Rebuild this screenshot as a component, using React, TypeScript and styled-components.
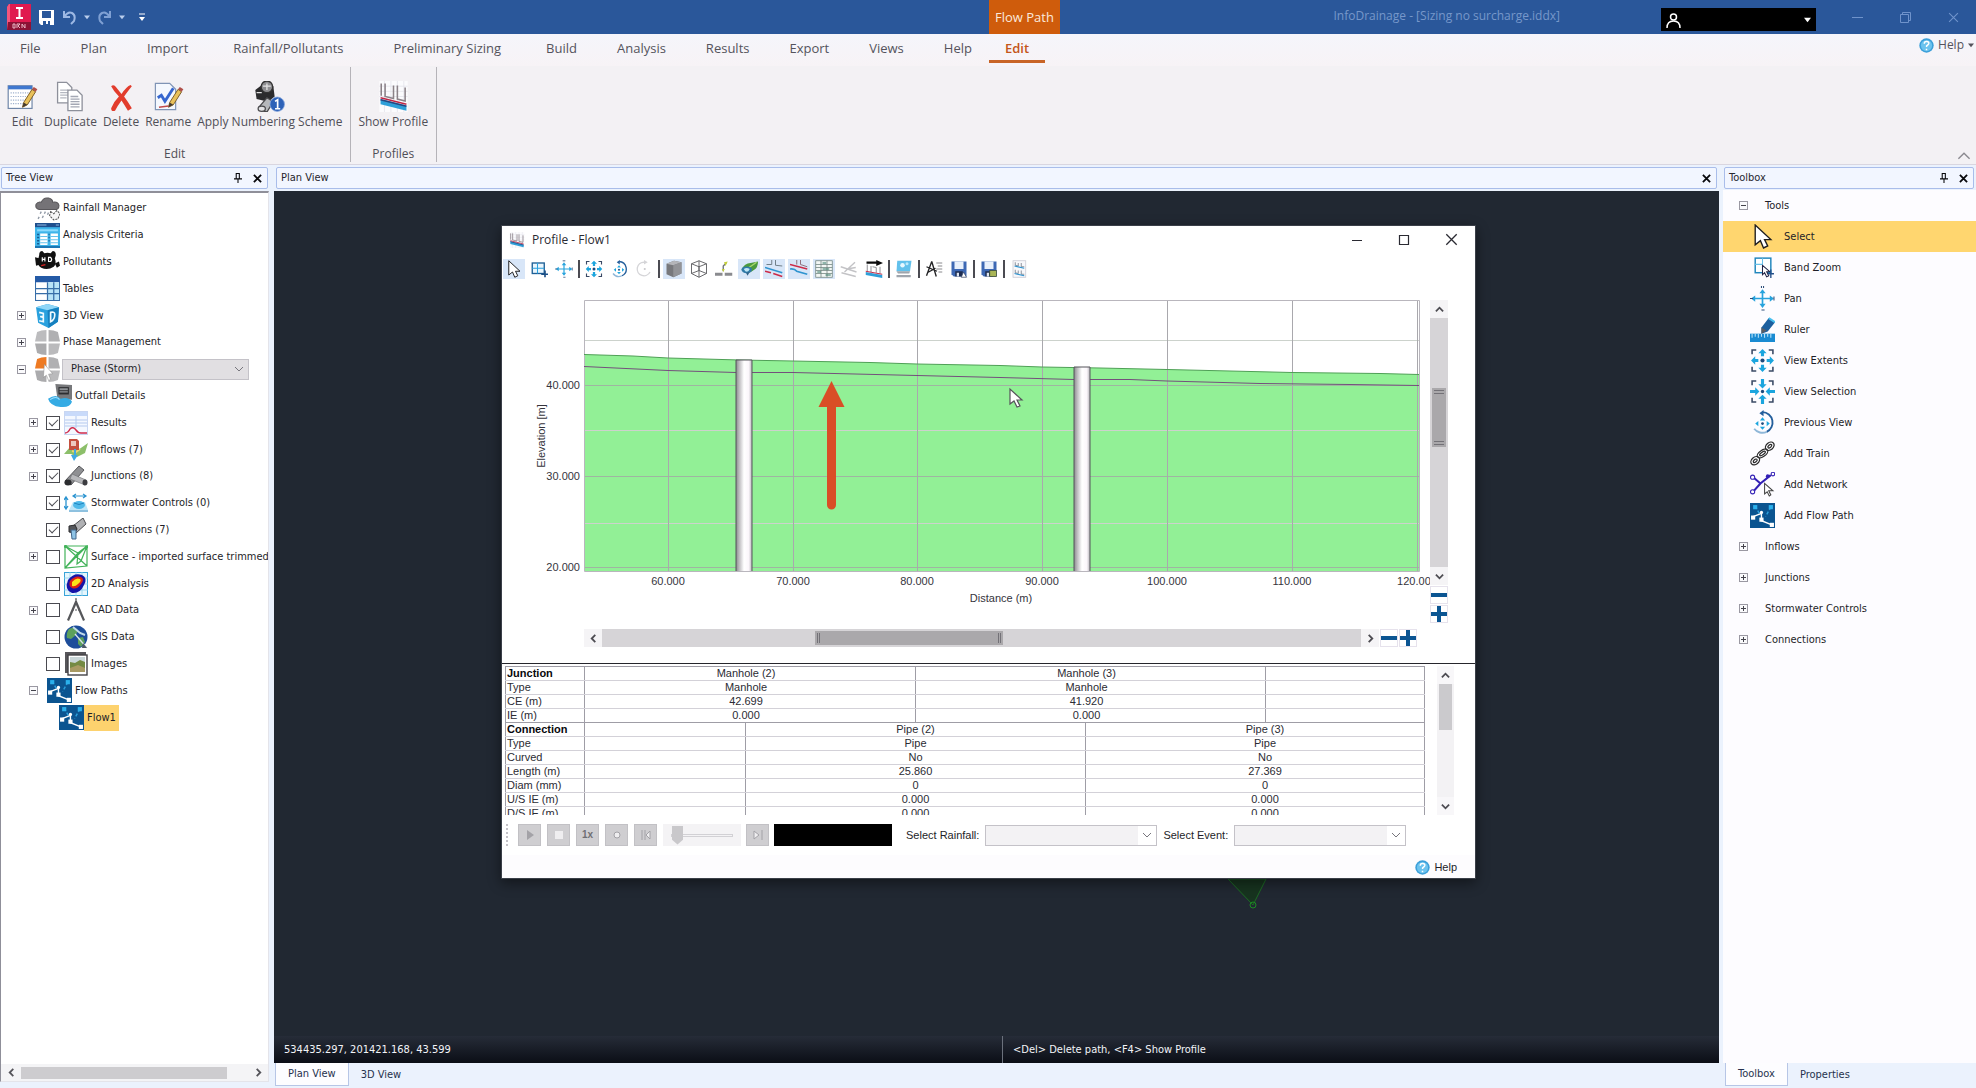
import React from "react";
import styled, { createGlobalStyle, css } from "styled-components";

const TAHOMA = `"DejaVu Sans Condensed", "DejaVu Sans", sans-serif`;
const SEGOE = `"Open Sans", "Noto Sans", sans-serif`;
const ARIAL = `"Liberation Sans", Arial, sans-serif`;
const CONTEXT_START = "989px";

const GlobalStyle = createGlobalStyle`
  *, *::before, *::after { box-sizing: border-box; }
  body { margin: 0; background: #eaf0fb; font: 11px/14px ${TAHOMA}; color: #1e1e28; overflow: hidden; }
  button, select, input { font: inherit; color: inherit; margin: 0; padding: 0; border: 0; background: none; }
  ul { list-style: none; margin: 0; padding: 0; }
  svg { display: block; flex: none; }
`;

/* ---------- icons ---------- */

type IconName = keyof typeof art;

const flowPathArt = (
  <>
    <rect width="24" height="24" fill="#0b5490" />
    <path d="M5 3l5 9M20 4l-5 9" stroke="#2b9fdc" strokeWidth="1.4" strokeDasharray="3 2" fill="none" />
    <rect x="3" y="2" width="4" height="4" fill="#2bb0ec" />
    <rect x="18" y="2" width="4" height="4" fill="#2bb0ec" />
    <path d="M3 13l8-3M11 9v8l10 4" stroke="#fff" strokeWidth="1.3" fill="none" />
    <rect x="1" y="12" width="4" height="4" fill="#fff" />
    <rect x="9" y="14" width="4" height="4" fill="#fff" />
    <circle cx="11" cy="9" r="1.6" fill="#fff" />
    <rect x="19" y="19" width="4" height="4" fill="#fff" />
  </>
);

const corners = <path d="M2 6V2h4M18 2h4v4M22 18v4h-4M6 22H2v-4" stroke="#3a4a66" strokeWidth="1.5" fill="none" />;

const profileArt = (
  <>
    <rect x="1" y="0" width="22" height="24" fill="#fbfbfd" />
    <path d="M1 4h22M1 8h22M1 12h22M5 0v24M10 0v24M15 0v24M20 0v24" stroke="#e2e2ea" strokeWidth=".6" />
    <path d="M2.500 2v9.500M5.500 2v10l6.500 1.500V3.500M15 3.500v10.500l6 1.500V5" stroke="#8b8288" strokeWidth="1.200" fill="none" />
    <path d="M2 14l20 5v4L2 18z" fill="#2d9fd8" />
    <path d="M2 13l20 5" stroke="#c02645" strokeWidth="1.200" />
    <path d="M2 14.500l20 5" stroke="#28467f" strokeWidth="1.200" />
  </>
);

const saveArt = (
  <>
    <path d="M2 2h20v20H5l-3-3z" fill="#3d68b4" />
    <rect x="6" y="2" width="12" height="10" fill="#e8f0fb" />
    <rect x="7" y="15" width="10" height="7" fill="#1d2c50" />
    <rect x="9" y="17" width="3" height="5" fill="#dfe6f2" />
  </>
);

const phaseTiles = (first: string) => (
  <>
    <path d="M2 2q4-2 9-2v11H0z" fill={first} />
    <path d="M13 0q5 0 9 2l2 9H13z" fill="#b0b0b2" />
    <path d="M0 13h11v11q-5 0-9-2z" fill="#ababad" />
    <path d="M13 13h11l-2 9q-4 2-9 2z" fill="#bababc" />
  </>
);

const linkChain = (
  <g fill="none" stroke="#2b2b2b" strokeWidth="1.2">
    <ellipse cx="5" cy="19" rx="4.6" ry="3.4" transform="rotate(-40 5 19)" />
    <ellipse cx="5" cy="19" rx="2.2" ry="1.2" transform="rotate(-40 5 19)" />
    <ellipse cx="12" cy="12" rx="5.8" ry="3" transform="rotate(-35 12 12)" />
    <ellipse cx="12" cy="12" rx="3.2" ry="1.2" transform="rotate(-35 12 12)" />
    <ellipse cx="19" cy="5" rx="4.6" ry="3.4" transform="rotate(-40 19 5)" />
    <ellipse cx="19" cy="5" rx="2.2" ry="1.2" transform="rotate(-40 19 5)" />
  </g>
);

const pencil = (
  <>
    <path d="M14 17l7-11 3 2-7 11-4 2z" fill="#e9c15a" stroke="#7a5a23" strokeWidth=".8" />
    <path d="M21 6l1.500-2 3 2-1.500 2z" fill="#b0504a" />
    <path d="M13 21l1-4 3 2z" fill="#453a30" />
  </>
);

const art = {
  editForm: (
    <>
      <rect x="1" y="3" width="20" height="19" fill="#fff" stroke="#6f86a8" />
      <rect x="1" y="3" width="20" height="3" fill="#3f78cf" />
      <path d="M3 9h16M3 12h16M3 15h16M3 18h16" stroke="#9fb1cd" strokeDasharray="1 1" />
      {pencil}
    </>
  ),
  duplicate: (
    <g fill="#fff" stroke="#8d909a">
      <path d="M2 1h7l4 4v12H2z" />
      <path d="M4 7h6M4 9h6M4 11h6M4 13h5" stroke="#b4b7c0" />
      <path d="M10 7h7l4 4v12H10z" />
      <path d="M12 12h6M12 14h7M12 16h7M12 18h7M12 20h7" stroke="#a4a8b4" />
    </g>
  ),
  remove: (
    <path d="M4 4q2-2 4 1l4 5q4-6 7-7l1 1q-4 5-6 8 3 4 6 9l-3 2q-3-5-5-8-3 4-5 8-3 1-3-2 2-5 6-9-4-4-6-8z" fill="#e23c2c" />
  ),
  rename: (
    <>
      <path d="M2 1h12l5 5v17H2z" fill="#f4f8fe" stroke="#7f94b5" />
      <path d="M4 13l3-2 3 5 7-11" stroke="#3566cf" strokeWidth="2.400" fill="none" />
      {pencil}
      <path d="M5 21l8-1" stroke="#c14b4b" strokeWidth="1.300" />
    </>
  ),
  numbering: (
    <>
      <path d="M1 7l5-4 9 1 1 8-5 4-9-2z" fill="#2b2b2d" />
      <circle cx="10" cy="4.500" r="4.500" fill="#8d8d90" stroke="#333" />
      <path d="M7 4h6M10 2v5M2 9h4" stroke="#e3e3e3" />
      <path d="M4 20l6-7 5 3-5 8-4-1z" fill="#b6b8bb" stroke="#4b4b4e" />
      <ellipse cx="6" cy="21.500" rx="2.800" ry="2" fill="#e3e3e5" stroke="#4b4b4e" />
      <circle cx="18" cy="18" r="5.600" fill="#2d62b8" stroke="#87a8de" strokeWidth=".6" />
      <path d="M16.300 15.800l2-1.300v7M16.300 21.500h4" stroke="#fff" strokeWidth="1.300" fill="none" />
    </>
  ),
  profile: profileArt,
  rain: (
    <>
      <path d="M4 13q-4-1-3-5 2-3 5-2 2-5 7-4 4 1 4 4 5-1 6 3 0 4-4 4z" fill="#757377" stroke="#59575b" />
      <path d="M6 15l-1 2M10 15l-1 2M8 19l-1 2M13 16l-1 2M4 20l-1 2" stroke="#8f98a5" strokeWidth="1.300" />
      <path d="M15 15l3 2 3-3 3 3-2 5-4 1-4-4z" fill="#f5f5f5" stroke="#555" strokeDasharray="2 1" />
    </>
  ),
  criteria: (
    <>
      <rect width="24" height="24" fill="#3fb5ea" />
      <rect width="24" height="4" fill="#1f4f8d" />
      <path d="M2 2h9M20 2h3" stroke="#8fb8e0" />
      <path d="M2 6h20v2H2z" fill="#8adafd" />
      <path d="M5 10h7v11H5zM15 10h7v11h-7z" fill="#fff" />
      <path d="M2 11h2M2 14h2M2 17h2M2 20h2M13 11h1M13 14h1M13 17h1" stroke="#15598f" strokeWidth="1.500" />
      <path d="M5 13h7M5 16h7M5 19h7M15 13h7M15 16h7M15 19h7" stroke="#65c2ec" />
      <rect y="22" width="24" height="2" fill="#1c77b4" />
    </>
  ),
  pollutants: (
    <>
      <path d="M4 6q0-4 3-4l2 2q3-1 6 0l2-2q3 0 3 4l-1 3q2 5-1 8-6 4-12 1-4-2-3-8z" fill="#111" />
      <path d="M0 8l5 1v6l-4 1zM19 14l4-2 1 4-3 2z" fill="#111" />
      <path d="M7 8v4M9.500 8v4M7 10h2.500M13 8v4h2q2-2 0-4z" stroke="#fff" strokeWidth="1.100" fill="none" />
      <path d="M6 16l4-1" stroke="#d22" strokeWidth="1.400" />
    </>
  ),
  tables: (
    <>
      <rect x=".5" y=".5" width="23" height="23" fill="#fff" stroke="#376ea8" />
      <rect width="24" height="6" fill="#245aa6" />
      <rect x="12" y="6" width="11" height="17" fill="#b7e3f7" />
      <path d="M0 12h24M0 17h24M12 6v18M18 6v18" stroke="#376ea8" strokeWidth="1.200" />
    </>
  ),
  view3d: (
    <>
      <path d="M12 1l11 3-1 14-9 6L3 19 1 4z" fill="#2aa1de" />
      <path d="M1 4l11-3 11 3-11 3z" fill="#8fd6f7" />
      <path d="M12 7l11-3-1 14-9 6z" fill="#1580bf" />
      <path d="M4 9l4 1v3l-3 0 3 1v4l-4-1" stroke="#eefaff" strokeWidth="1.600" fill="none" />
      <path d="M15 9v9q4-2 4-7 0-3-4-2z" stroke="#eefaff" strokeWidth="1.600" fill="none" />
    </>
  ),
  phases: phaseTiles("#bcbcbe"),
  phaseActive: (
    <>
      {phaseTiles("#ee7a22")}
      <path d="M9 7l8 9-4 .5 2 5-2 1-2-5-3 2z" fill="#fff" stroke="#8a8a8a" strokeWidth=".5" />
    </>
  ),
  outfall: (
    <>
      <path d="M8 1l16 1v14l-14-1z" fill="#77787b" />
      <path d="M11 4h10v7H11z" fill="#2c2d30" />
      <path d="M12 5h8v2h-8zM12 8h8v1h-8z" fill="#8f9296" />
      <path d="M1 15q8-5 12 0 8-2 11 3-2 6-11 5Q3 22 1 15z" fill="#35abe4" />
      <path d="M3 16q6-4 9 0" stroke="#a5e0fa" fill="none" />
    </>
  ),
  results: (
    <>
      <rect x=".5" y=".5" width="23" height="23" fill="#f4f8ff" stroke="#c8d6f2" />
      <rect x="1" y="1" width="22" height="4" fill="#c8dafa" />
      <path d="M1 9h22M1 12h22M1 15h22M12 5v12" stroke="#b4c9ee" />
      <path d="M1 22q3 0 5-4 3-3 6 1 2 3 5 3h6" stroke="#cf2a4b" strokeWidth="1.400" fill="none" />
    </>
  ),
  inflows: (
    <>
      <path d="M0 16l6-7 8 3 10-7-3 10-8 4-6-3z" fill="#8cbf6a" />
      <path d="M8 13l4 1 4-3" stroke="#e9d46f" strokeWidth="2" fill="none" />
      <path d="M5 1h8l2 2v9H5z" fill="#c4503f" />
      <path d="M7 3h5v5H7z" fill="#eec8bf" />
      <path d="M10 11v6H7l3 6 4-6h-2v-6z" fill="#3fa9e2" />
    </>
  ),
  junctions: (
    <>
      <path d="M1 17L15 2l5 4L7 21z" fill="#8f9093" stroke="#55565a" />
      <path d="M8 10l14 6-1 5L6 15z" fill="#b7b8bb" stroke="#6a6b6e" strokeWidth=".6" />
      <ellipse cx="4" cy="18.500" rx="3.600" ry="3" fill="#2c2d30" />
      <ellipse cx="21" cy="18.500" rx="2.500" ry="3" fill="#3b3c40" />
    </>
  ),
  storm: (
    <>
      <path d="M2 7v10M0 9l2-3 2 3M0 15l2 3 2-3" stroke="#2a93d0" strokeWidth="1.300" fill="none" />
      <path d="M10 5h11M12 3L9 5l3 2M19 3l3 2-3 2" stroke="#2a93d0" strokeWidth="1.200" fill="none" />
      <path d="M5 19l4-8h12l3 8z" fill="#bfe6f8" />
      <ellipse cx="15" cy="14" rx="6" ry="4" fill="#4fb9e9" />
      <path d="M10 12q5 3 10 0M5 20h19" stroke="#1f84c0" fill="none" />
    </>
  ),
  connections: (
    <>
      <path d="M9 8L19 0l3 6-10 9z" fill="#b0b1b4" stroke="#4c4d50" />
      <path d="M5 8l6-1 2 4-2 4-6-1z" fill="#54565a" stroke="#2c2c2e" />
      <path d="M7 12h5v9H8z" fill="#8fc4e6" stroke="#44678a" />
    </>
  ),
  surface: (
    <g fill="none" stroke="#43b35a" strokeWidth="1.200">
      <path d="M1 1h22v20L1 23zM1 1l22 20M23 1L1 23M1 23L14 8l9-7-6 15-4 3 1-11M14 8L1 1" />
      <circle cx="1.500" cy="1.500" r="1" />
      <circle cx="22.500" cy="2" r="1" />
    </g>
  ),
  analysis2d: (
    <>
      <rect x=".5" y=".5" width="23" height="23" fill="#e5f6fd" stroke="#38a3d8" />
      <path d="M6 0v24M12 0v24M18 0v24M0 6h24M0 12h24M0 18h24" stroke="#8ed0ec" strokeWidth=".8" />
      <path d="M4 8q6-8 14-5 6 3 2 10-4 9-12 8-8-3-4-13z" fill="#1614a8" />
      <path d="M6 9q5-6 11-4 4 2 0 7-4 6-9 4-4-2-2-7z" fill="#dd2016" />
      <path d="M8 10q4-5 8-3 2 2-2 5-3 3-6 2z" fill="#fde21a" />
    </>
  ),
  cad: (
    <>
      <path d="M12 1l9 21-2 1L12 7 5 23l-2-1z" fill="#56575a" />
      <path d="M12 0v4M8 12l8 0" stroke="#56575a" strokeWidth="1.200" strokeDasharray="2 1" />
    </>
  ),
  gis: (
    <>
      <circle cx="12" cy="12" r="11.500" fill="#1d4d9a" />
      <path d="M5 4q6-3 9 1l-2 5-5 4-4-1Q2 8 5 4zM14 13l5-1 2 5-4 5-3-3z" fill="#5da05c" />
      <path d="M9 2l7 6 5 2" stroke="#bfd9ea" strokeWidth="2" fill="none" />
      <path d="M11 9l12 14" stroke="#d8e2ea" strokeWidth="1.300" />
      <path d="M19 18l4 5h-5z" fill="#4c5965" />
    </>
  ),
  images: (
    <>
      <path d="M1 0h21v3H4v18H1z" fill="#57565a" />
      <rect x="4" y="3" width="19" height="20" fill="#fff" stroke="#434246" strokeWidth="1.400" />
      <rect x="6" y="5" width="15" height="15" fill="#748a43" />
      <path d="M6 5h15v5l-5-2-5 3-5-1z" fill="#c9d6d8" />
      <path d="M6 16l8-3 7 3v4H6z" fill="#a89a63" />
    </>
  ),
  flowPath: flowPathArt,
  arrow: <path d="M5 1v19l5-4 3 7 4-2-3-6h6z" fill="#fff" stroke="#1d1d1f" strokeWidth="1.300" />,
  bandZoom: (
    <>
      <rect x="5" y="3" width="15" height="14" fill="#fff" stroke="#2186bd" strokeWidth="1.400" />
      <path d="M5 9h7M12 3v6" stroke="#69c1ea" />
      <path d="M12 10v9l2-2 2 4 2-1-2-4h3z" fill="#fff" stroke="#224" />
      <path d="M20 14v8M17 18h6" stroke="#234f8a" strokeWidth="1.300" />
    </>
  ),
  bandZoomSmall: (
    <>
      <rect x="3" y="4" width="16" height="14" fill="#eaf6fd" stroke="#1d5f96" strokeWidth="1.800" />
      <path d="M3 11h16M10 4v14" stroke="#2aa1de" strokeWidth="1.400" />
      <path d="M20 14v9M15 19h9" stroke="#1c4f86" strokeWidth="2.200" />
    </>
  ),
  pan: (
    <>
      <path d="M12 5v14M4 12h16" stroke="#27a3dd" strokeWidth="1.600" />
      <path d="M12 3l3 4H9zM12 21l3-4H9zM19 9l4 3-4 3zM5 9l-4 3 4 3z" fill="#27a3dd" />
      <path d="M11 0v2M13 0v2M11 23h3M0 12h3M23 10v4" stroke="#2c4d78" />
    </>
  ),
  ruler: (
    <>
      <rect x="0" y="16" width="24" height="8" fill="#1a8bd2" />
      <path d="M2 16v4M5 16v3M8 16v4M11 16v3M14 16v4M17 16v3M20 16v4" stroke="#bfe6fb" />
      <path d="M11 10l7-9 6 4-7 9-6 2z" fill="#1c5f9e" />
      <path d="M18 1l6 4" stroke="#49c0ef" strokeWidth="2" />
      <path d="M11 10l5 3-5 3z" fill="#5b5e63" />
    </>
  ),
  extents: (
    <>
      {corners}
      <path d="M12 1l4 4h-2.500v3h-3V5H8zM12 23l4-4h-2.500v-3h-3v3H8zM1 12l4-4v2.500h3v3H5V16zM23 12l-4-4v2.500h-3v3h3V16z" fill="#1ba5de" />
      <circle cx="12" cy="12" r="2" fill="#1d4a7c" />
    </>
  ),
  selection: (
    <>
      {corners}
      <path d="M12 9L8 5h2.500V0h3v5H16zM12 15l4 4h-2.500v5h-3v-5H8zM9 12l-4-4v2.500H0v3h5V16zM15 12l4-4v2.500h5v3h-5V16z" fill="#1ba5de" />
      <circle cx="12" cy="12" r="1.600" fill="#1d4a7c" />
    </>
  ),
  previous: (
    <>
      <path d="M12 2a10 10 0 0 1 4 19" stroke="#245f9c" strokeWidth="1.800" fill="none" />
      <path d="M16 21a10 10 0 0 1-12-3" stroke="#8fb7d8" strokeWidth="1.800" fill="none" />
      <path d="M13 0v6L9 3z" fill="#245f9c" />
      <path d="M12 7l2.500 3h-5zM12 19l2.500-3h-5zM5 13l3-2.500v5zM19 13l-3-2.500v5z" fill="#1ba5de" />
      <circle cx="12" cy="13" r="1.300" fill="#1d4a7c" />
    </>
  ),
  next: (
    <>
      <path d="M12 3a9 9 0 1 0 8 13" stroke="#d5d5d8" strokeWidth="1.800" fill="none" />
      <path d="M12 0v6l5-3z" fill="#d5d5d8" />
      <circle cx="13" cy="12" r="1.400" fill="#c8c8cc" />
    </>
  ),
  train: linkChain,
  network: (
    <>
      <path d="M2 4l8 7 10-8M10 11l-8 9" stroke="#3320b5" strokeWidth="2" fill="none" />
      <circle cx="2.500" cy="5" r="2" fill="#fff" stroke="#3320b5" />
      <circle cx="2.500" cy="19" r="2" fill="#fff" stroke="#3320b5" />
      <circle cx="17" cy="4" r="1.800" fill="#3320b5" />
      <circle cx="22" cy="2" r="1.700" fill="#fff" stroke="#3320b5" />
      <path d="M14 11v10l2.500-2 2 4 1.500-1-2-4h4z" fill="#fff" stroke="#444" />
    </>
  ),
  cube: (
    <>
      <path d="M2 5l10-4 10 2v15l-11 5-9-4z" fill="#77787c" />
      <path d="M2 5l10-4 10 2-11 4z" fill="#b4b5b9" />
      <path d="M11 7l11-4v15l-11 5z" fill="#929397" />
    </>
  ),
  wireCube: (
    <path d="M2 5l10-4 10 4v13l-10 5-10-5zM2 5l10 4 10-4M12 9v14M12 1v13M2 18l10-4 10 4" stroke="#5a5a5e" strokeWidth="1.200" fill="none" />
  ),
  levels: (
    <>
      <path d="M0 17h10v4H0zM13 17h10v4H13z" fill="#8a8b8f" />
      <path d="M11 15V8l4-4" stroke="#6d7277" strokeWidth="1.800" fill="none" />
      <path d="M9 12l2 4 2-4zM12 3l5-1-3 6z" fill="#c4cf3b" />
    </>
  ),
  leaf: (
    <>
      <path d="M2 13Q6 4 14 4l10-2q0 8-5 11-7 6-13 3z" fill="#4c9a3d" />
      <path d="M12 10q6-4 10-7" stroke="#a6d66c" strokeWidth="2" fill="none" />
      <ellipse cx="9" cy="13" rx="7" ry="4.500" fill="#2f7aa8" />
      <path d="M5 12q4-3 8 0-2 5-6 3z" fill="#bfe5f5" />
      <path d="M8 17l2 4 3-5z" fill="#33648a" />
    </>
  ),
  linesA: (
    <>
      <path d="M2 6h7V0M14 0v7l9 1" stroke="#6e7c86" strokeWidth="1.300" fill="none" />
      <path d="M0 10l23 7" stroke="#2f94d0" strokeWidth="2.200" />
      <path d="M0 15l8 2M11 18l12 4" stroke="#cc2a48" strokeWidth="2" />
    </>
  ),
  linesB: (
    <>
      <path d="M14 0v6l9 3M9 0v6" stroke="#8e6f7c" strokeWidth="1.300" fill="none" />
      <path d="M0 6l23 6" stroke="#cc2a48" strokeWidth="1.800" />
      <path d="M0 12q6-1 9 3l14 4" stroke="#2f94d0" strokeWidth="2.200" fill="none" />
    </>
  ),
  grid: (
    <>
      <rect x="1" y="1" width="22" height="22" fill="#f3f7f5" stroke="#6e827c" />
      <path d="M1 6h22M1 10h22M1 14h22M1 18h22M8 1v22M16 1v22" stroke="#6e827c" />
      <path d="M10 4h5M10 12h9M3 16h5M14 20h7" stroke="#2c7460" strokeWidth="1.600" />
    </>
  ),
  fadedLines: (
    <path d="M1 9l21 7M2 17l19 5M6 16L20 3M9 12l12-2" stroke="#c3c3c6" strokeWidth="1.800" fill="none" />
  ),
  direction: (
    <>
      <path d="M2 2h13V0l9 4-9 4V5H2z" fill="#0c0c0d" />
      <path d="M3 6v9M8 8v8M10 9l5 1v7M20 9v9" stroke="#85858a" strokeWidth="1.200" fill="none" />
      <path d="M1 16l22 4v4L1 20z" fill="#2d9fd8" />
      <path d="M1 15l22 4" stroke="#c02645" strokeWidth="1.300" />
    </>
  ),
  image3d: (
    <>
      <path d="M3 1h19l-2 14H2z" fill="#62c1ec" />
      <circle cx="10" cy="7" r="3" fill="#e7f8ff" />
      <circle cx="16" cy="5" r="2" fill="#bdeafc" />
      <path d="M2 15h18l-1 3H4zM2 20h19v3H2z" fill="#9fa5ad" />
    </>
  ),
  scaleText: (
    <>
      <path d="M9 2l6 20M9 2L2 21M2 9l14 6M3 17l11-6" stroke="#232325" strokeWidth="1.800" fill="none" />
      <path d="M15 4h8M17 8h6M15 12h8M18 16h5" stroke="#7c7c80" strokeWidth="1.200" />
    </>
  ),
  saveA: (
    <>
      {saveArt}
      <path d="M15 23l3-7 4 7z" fill="#fff" stroke="#3b4a68" />
    </>
  ),
  saveB: (
    <>
      {saveArt}
      <rect x="13" y="14" width="9" height="8" fill="#a9b556" stroke="#3b4a38" />
    </>
  ),
  report: (
    <>
      <rect x="4" y="1" width="17" height="22" fill="#f8f8fb" stroke="#c6c6cf" />
      <path d="M7 3v4l4 1V4M15 4v5h4M7 13v4l4 1v-4M15 14v5h4" stroke="#6a707c" fill="none" />
      <path d="M6 8l13 3M6 18l13 3" stroke="#2f94d0" strokeWidth="1.600" />
    </>
  ),
  help: (
    <>
      <circle cx="12" cy="12" r="11.500" fill="#3b9fd9" />
      <circle cx="12" cy="12" r="9" fill="#6cc3ee" />
      <path d="M8.500 9q0-4 4-3.500 4 .5 3 3.700-.6 1.500-3.300 3.300v2M12 17v2.600" stroke="#fff" strokeWidth="2.400" fill="none" />
    </>
  ),
};

const Icon = ({ name, size = 24 }: { name: IconName; size?: number }) => (
  <svg width={size} height={size} viewBox={name === "editForm" || name === "rename" ? "0 0 26 24" : "0 0 24 24"} aria-hidden="true">
    {art[name]}
  </svg>
);

const Chevron = ({ dir = "down", size = 9, width = 1 }: { dir?: "up" | "down" | "left" | "right"; size?: number; width?: number }) => {
  const d = { down: "M1 3l4 4 4-4", up: "M1 7l4-4 4 4", left: "M7 1L3 5l4 4", right: "M3 1l4 4-4 4" }[dir];
  return (
    <svg width={size} height={size} viewBox="0 0 10 10" aria-hidden="true">
      <path d={d} fill="none" stroke="currentColor" strokeWidth={width} />
    </svg>
  );
};

const Caret = ({ size = 7 }: { size?: number }) => (
  <svg width={size} height={size} viewBox="0 0 8 8" aria-hidden="true">
    <path d="M0 2h8L4 7z" fill="currentColor" />
  </svg>
);

const Cross = ({ size = 10, width = 1 }: { size?: number; width?: number }) => (
  <svg width={size} height={size} viewBox="0 0 10 10" aria-hidden="true">
    <path d="M1 1l8 8M9 1L1 9" stroke="currentColor" strokeWidth={width} />
  </svg>
);

const Pin = () => (
  <svg width="8" height="10" viewBox="0 0 9 11" aria-hidden="true">
    <path d="M2.500 0v6M2 .5h4.500M6 0v6M0 6.500h9M4.500 7v4" stroke="currentColor" strokeWidth="1.200" fill="none" />
  </svg>
);

/* ---------- window frame ---------- */

const Page = styled.div`
  height: 100vh;
  min-height: 960px;
  display: flex;
  flex-direction: column;
`;

const TitleBar = styled.header`
  display: flex;
  height: 34px;
  background: #2a579a;
  color: #fff;
  font-family: ${SEGOE};
`;

const QuickAccess = styled.div`
  flex: 0 0 ${CONTEXT_START};
  display: flex;
  align-items: center;
  gap: 7px;
  padding-left: 7px;
`;

const FlatButton = styled.button<{ $tone?: string }>`
  display: grid;
  place-items: center;
  color: ${(p) => p.$tone ?? "inherit"};
`;

const ContextTitle = styled.div`
  width: 71px;
  padding-top: 8px;
  background: #cf5c0c;
  color: #fbe9dc;
  font-size: 13px;
  line-height: 18px;
  text-align: center;
`;

const WindowTitle = styled.div`
  margin-left: auto;
  padding-right: 101px;
  font-size: 12px;
  line-height: 32px;
  color: #7797ca;
`;

const Account = styled.button`
  display: flex;
  align-items: center;
  justify-content: space-between;
  width: 155px;
  height: 23px;
  margin-top: 8px;
  padding: 0 5px;
  background: #000;
  color: #fff;
`;

const WindowButtons = styled.div`
  display: flex;
  align-items: center;
  gap: 37px;
  padding: 0 17px 0 36px;
  color: #6f93cb;
`;

const MenuBar = styled.nav`
  display: flex;
  height: 32px;
  background: linear-gradient(#f5f5fb, #f7f3f6);
  font: 13px/18px ${SEGOE};
  color: #54535c;
`;

const MenuTabs = styled.div`
  flex: 0 0 ${CONTEXT_START};
  display: flex;
  min-width: 0;
`;

const MenuTab = styled.button<{ $wide?: boolean; $active?: boolean }>`
  flex: none;
  padding: 0 ${(p) => (p.$wide ? 25 : 20)}px;
  height: 28px;
  white-space: nowrap;
  ${(p) =>
    p.$active &&
    css`
      width: 56px;
      height: 29px;
      padding: 2px 0 0;
      font-weight: 600;
      color: #c4561a;
      border-bottom: 3px solid #c86426;
    `}
`;

const HelpMenu = styled.button`
  display: flex;
  align-items: center;
  gap: 4px;
  height: 22px;
  margin-left: auto;
  padding-right: 2px;
  font-size: 12px;
`;

const Ribbon = styled.section`
  display: flex;
  height: 99px;
  background: #f3f1f4;
  border-bottom: 1px solid #d9d6e0;
  font: 12px/16px ${SEGOE};
  color: #504f57;
`;

const RibbonGroup = styled.div`
  display: flex;
  flex-direction: column;
  justify-content: space-between;
  align-items: center;
  height: 95px;
  margin-top: 1px;
  padding: 14px 8px 0 7px;
  border-right: 1px solid #b5b3b8;
`;

const RibbonItems = styled.div`
  display: flex;
  gap: 6px;
`;

const RibbonButton = styled.button`
  display: flex;
  flex-direction: column;
  align-items: center;
  gap: 2px;
  white-space: nowrap;
`;

const Collapse = styled.button`
  align-self: flex-end;
  margin: 0 5px 1px auto;
  color: #8b8a90;
`;

const Workspace = styled.main`
  flex: 1;
  display: flex;
  min-height: 0;
  padding-top: 2px;
  background: #ebf2fd;
`;

const Side = styled.aside<{ $width: number }>`
  flex: 0 0 ${(p) => p.$width}px;
  display: flex;
  flex-direction: column;
  min-width: 0;
`;

const Center = styled.section`
  flex: 1;
  display: flex;
  flex-direction: column;
  min-width: 0;
`;

const PaneHeader = styled.header<{ $left?: number; $right?: number }>`
  display: flex;
  align-items: center;
  gap: 11px;
  height: 22px;
  margin: 0 ${(p) => p.$right ?? 2}px 0 ${(p) => p.$left ?? 1}px;
  padding: 0 5px 0 4px;
  background: #f2f6ff;
  border: 1px solid #a9bdea;
  border-radius: 2px;
  color: #26262e;

  h2 {
    flex: 1;
    margin: 0;
    font: inherit;
  }
  button {
    color: #08080c;
  }
`;

const BottomTabs = styled.div<{ $start?: number }>`
  display: flex;
  height: 25px;
  padding-left: ${(p) => p.$start ?? 1}px;
`;

const BottomTab = styled.button<{ $active?: boolean }>`
  height: 23px;
  padding: 0 12px;
  color: #26324e;
  ${(p) =>
    p.$active &&
    css`
      background: #fdfdff;
      border: 1px solid #b7c6e6;
      border-top: 0;
    `}
`;

/* ---------- tree ---------- */

const TreeBody = styled.div`
  flex: 1;
  display: flex;
  flex-direction: column;
  justify-content: space-between;
  margin: 2px 5px 6px 0;
  background: #fff;
  border: 1px solid #8f8f99;
  border-top-width: 2px;
  border-right-color: #e4e4ea;
  border-bottom-color: #e4e4ea;
  overflow: hidden;
`;

const TreeList = styled.ul`
  display: grid;
  grid-auto-rows: 1fr;
  height: 538px;
  padding-top: 2px;
`;

const TreeRow = styled.li<{ $indent: number }>`
  display: flex;
  align-items: center;
  padding-left: ${(p) => p.$indent}px;
  white-space: nowrap;
`;

const Expander = styled.button`
  display: grid;
  place-items: center;
  width: 9px;
  height: 9px;
  border: 1px solid #9a98a2;
  background: #fafafc;
  color: #44434c;
`;

const ExpanderSlot = styled.span<{ $gap: number }>`
  flex: none;
  width: 9px;
  margin-right: ${(p) => p.$gap}px;
`;

const TreeLabel = styled.label<{ $selected?: boolean }>`
  padding: 0 3px;
  line-height: 26px;
  ${(p) => p.$selected && "background: #fdd26e;"}
`;

const CheckBox = styled.input.attrs({ type: "checkbox" })`
  appearance: none;
  flex: none;
  width: 14px;
  height: 14px;
  margin-right: 4px;
  border: 1px solid #4a4a50;
  background: #fff;
  display: grid;
  place-items: center;

  &:checked::after {
    content: "";
    width: 9px;
    height: 5px;
    margin-top: -3px;
    border: solid #4a4a50;
    border-width: 0 0 1px 1px;
    rotate: -45deg;
  }
`;

const SelectBox = styled.span<{ $width: number; $shade: string; $key: string }>`
  display: grid;
  grid-template: 19px / 1fr 18px;
  align-items: center;
  width: ${(p) => p.$width}px;
  background: linear-gradient(to left, ${(p) => p.$key} 18px, ${(p) => p.$shade} 18px);
  border: 1px solid #c4c2c8;

  select {
    grid-area: 1 / 1 / 2 / 3;
    appearance: none;
    height: 100%;
    padding-left: 8px;
  }
  svg {
    grid-area: 1 / 2;
    justify-self: center;
    pointer-events: none;
    color: #77767d;
  }
`;

const PhaseSlot = styled.span`
  margin-left: 2px;
`;

const HScroll = styled.div`
  display: flex;
  align-items: center;
  height: 17px;
  background: #f4f4f6;
  color: #55545a;

  button {
    width: 20px;
    display: grid;
    place-items: center;
  }
`;

const HTrack = styled.div`
  flex: 1;
  height: 12px;
`;

const HThumb = styled.div`
  width: 206px;
  height: 12px;
  background: #cdcccf;
`;

type Node = {
  label: string;
  icon: IconName;
  level: 0 | 1 | 2;
  sign?: "+" | "-";
  checked?: boolean;
  combo?: boolean;
  selected?: boolean;
};

const nodes: Node[] = [
  { label: "Rainfall Manager", icon: "rain", level: 0 },
  { label: "Analysis Criteria", icon: "criteria", level: 0 },
  { label: "Pollutants", icon: "pollutants", level: 0 },
  { label: "Tables", icon: "tables", level: 0 },
  { label: "3D View", icon: "view3d", level: 0, sign: "+" },
  { label: "Phase Management", icon: "phases", level: 0, sign: "+" },
  { label: "Phase (Storm)", icon: "phaseActive", level: 0, sign: "-", combo: true },
  { label: "Outfall Details", icon: "outfall", level: 1 },
  { label: "Results", icon: "results", level: 1, sign: "+", checked: true },
  { label: "Inflows (7)", icon: "inflows", level: 1, sign: "+", checked: true },
  { label: "Junctions (8)", icon: "junctions", level: 1, sign: "+", checked: true },
  { label: "Stormwater Controls (0)", icon: "storm", level: 1, checked: true },
  { label: "Connections (7)", icon: "connections", level: 1, checked: true },
  { label: "Surface - imported surface trimmed", icon: "surface", level: 1, sign: "+", checked: false },
  { label: "2D Analysis", icon: "analysis2d", level: 1, checked: false },
  { label: "CAD Data", icon: "cad", level: 1, sign: "+", checked: false },
  { label: "GIS Data", icon: "gis", level: 1, checked: false },
  { label: "Images", icon: "images", level: 1, checked: false },
  { label: "Flow Paths", icon: "flowPath", level: 1, sign: "-" },
  { label: "Flow1", icon: "flowPath", level: 2, selected: true },
];

const ExpandSign = ({ sign, name }: { sign: "+" | "-"; name: string }) => (
  <Expander aria-label={`${sign === "+" ? "Expand" : "Collapse"} ${name}`}>
    <svg width="5" height="5" viewBox="0 0 5 5" aria-hidden="true">
      <path d={sign === "+" ? "M0 2.500h5M2.500 0v5" : "M0 2.500h5"} stroke="currentColor" />
    </svg>
  </Expander>
);

const Tree = () => (
  <TreeList>
    {nodes.map((n) => {
      const id = `node-${n.label.replace(/\W+/g, "-")}`;
      const hasBox = n.checked !== undefined;
      return (
        <TreeRow key={n.label} $indent={16 + n.level * 12}>
          <ExpanderSlot $gap={hasBox ? 8 : 9}>{n.sign && <ExpandSign sign={n.sign} name={n.label} />}</ExpanderSlot>
          {hasBox && <CheckBox id={id} defaultChecked={n.checked} />}
          <Icon name={n.icon} size={hasBox ? 24 : 25} />
          {n.combo ? (
            <PhaseSlot>
              <SelectBox $width={187} $shade="#e1dfe2" $key="#e1dfe2">
                <select aria-label="Phase" defaultValue={n.label}>
                  <option>{n.label}</option>
                </select>
                <Chevron size={10} />
              </SelectBox>
            </PhaseSlot>
          ) : (
            <TreeLabel as={hasBox ? "label" : "span"} htmlFor={hasBox ? id : undefined} $selected={n.selected}>
              {n.label}
            </TreeLabel>
          )}
        </TreeRow>
      );
    })}
  </TreeList>
);

/* ---------- toolbox ---------- */

const ToolboxBody = styled.div`
  flex: 1;
  margin: 1px 0 0 4px;
  background: #fdfcff;
`;

const ToolRow = styled.li<{ $active?: boolean }>`
  ${(p) => p.$active && "background: #ffd66f;"}
`;

const ToolButton = styled.button`
  display: flex;
  align-items: center;
  gap: 9px;
  width: 100%;
  height: 31px;
  padding-left: 27px;
`;

const CategoryRow = styled.div`
  display: flex;
  align-items: center;
  gap: 17px;
  height: 31px;
  padding-left: 16px;
`;

const tools: [string, IconName][] = [
  ["Select", "arrow"],
  ["Band Zoom", "bandZoom"],
  ["Pan", "pan"],
  ["Ruler", "ruler"],
  ["View Extents", "extents"],
  ["View Selection", "selection"],
  ["Previous View", "previous"],
  ["Add Train", "train"],
  ["Add Network", "network"],
  ["Add Flow Path", "flowPath"],
];

const Category = ({ name, sign }: { name: string; sign: "+" | "-" }) => (
  <CategoryRow>
    <ExpandSign sign={sign} name={name} />
    {name}
  </CategoryRow>
);

/* ---------- plan canvas ---------- */

const Canvas = styled.div`
  position: relative;
  flex: 1;
  display: flex;
  flex-direction: column;
  justify-content: flex-end;
  margin-top: 2px;
  background: #212832;
`;

const SurfaceTip = styled.svg`
  position: absolute;
  left: 952px;
  top: 686px;
`;

const StatusBar = styled.footer`
  display: flex;
  height: 27px;
  background: linear-gradient(#262c38, #0b0e16);
  color: #f2f4f8;
  line-height: 27px;
`;

const StatusCell = styled.div<{ $width?: number }>`
  flex: ${(p) => (p.$width ? `0 0 ${p.$width}px` : "1")};
  padding-left: 10px;

  & + & {
    border-left: 1px solid #6b717c;
  }
`;

/* ---------- profile window ---------- */

const Dialog = styled.section`
  position: absolute;
  left: 227px;
  top: 34px;
  width: 975px;
  background: #fff;
  box-shadow: 0 4px 12px rgba(0, 0, 0, 0.45);
  border: 1px solid #3a3f48;
  font-family: ${ARIAL};
`;

const DialogTitle = styled.header`
  display: flex;
  align-items: center;
  height: 29px;
  padding: 0 17px 2px 7px;
  gap: 7px;
  font: 12px/16px ${SEGOE};
  color: #2a2a32;

  h1 {
    flex: 1;
    margin: 0;
    font: inherit;
  }
`;

const DialogButtons = styled.div`
  display: flex;
  align-items: center;
  gap: 35px;
`;

const ToolBar = styled.div`
  display: flex;
  align-items: center;
  gap: 3px;
  height: 27px;
  padding-left: 1px;
`;

const ToolIcon = styled.button<{ $on?: boolean }>`
  display: grid;
  place-items: center;
  width: 22px;
  height: 20px;
  ${(p) => p.$on && "background: #d8e6f8;"}
`;

const Divider = styled.span`
  width: 2px;
  height: 18px;
  background: #4b4b52;
`;

const toolbar: (IconName | "|")[] = [
  "arrow", "bandZoomSmall", "pan", "|",
  "extents", "previous", "next", "|",
  "cube", "wireCube", "levels", "leaf", "linesA", "linesB", "grid", "fadedLines", "direction", "|",
  "image3d", "|",
  "scaleText", "saveA", "|",
  "saveB", "|",
  "report",
];
const pressed = ["arrow", "cube", "leaf", "linesA", "linesB", "grid"];

const ChartArea = styled.div`
  display: grid;
  grid-template-columns: 927px 18px;
  padding: 18px 0 0 1px;
`;

const VBar = styled.div<{ $track: string; $edge: string }>`
  display: flex;
  flex-direction: column;
  background: ${(p) => p.$track};
  color: #4d4c52;

  > button {
    display: grid;
    place-items: center;
    width: 100%;
    height: 18px;
    background: ${(p) => p.$edge};
  }
`;

const VBarTrack = styled.div<{ $height: number; $before: number }>`
  height: ${(p) => p.$height}px;
  padding: ${(p) => p.$before}px 2px 0;
`;

const Grip = styled.div<{ $vertical?: boolean }>`
  display: flex;
  flex-direction: ${(p) => (p.$vertical ? "column" : "row")};
  justify-content: space-between;
  ${(p) => (p.$vertical ? "height: 59px; padding: 2px;" : "width: 188px; height: 14px; padding: 2px;")}
  background: #aaa8ab;

  i {
    ${(p) => (p.$vertical ? "height: 4px; border: solid #737177; border-width: 1px 0;" : "width: 3px; border: solid #737177; border-width: 0 1px;")}
  }
`;

const ZoomKey = styled.button`
  display: grid;
  place-items: center;
  width: 18px;
  height: 18px;
  border: 1px solid #e6e2ec;
  background: #fff;
  color: #0b5592;
`;

const SideKeys = styled.div`
  display: flex;
  flex-direction: column;
  gap: 1px;
`;

const RangeRow = styled.div`
  display: flex;
  gap: 1px;
  height: 34px;
  padding-left: 82px;
`;

const RangeBar = styled.div`
  display: flex;
  width: 795px;
  height: 18px;
  background: #d6d4d7;
  color: #4d4c52;

  button {
    display: grid;
    place-items: center;
    width: 18px;
    background: #f5f4f6;
  }
`;

const RangeTrack = styled.div`
  flex: 1;
  padding: 2px 0 0 213px;
`;

const DataPane = styled.div`
  display: flex;
  justify-content: space-between;
  height: 152px;
  padding: 2px 21px 0 3px;
  border-top: 1px solid #26262c;
  overflow: hidden;
`;

const Tables = styled.div`
  width: 920px;
  height: 149px;
  overflow: hidden;
`;

const DataTable = styled.table`
  width: 100%;
  table-layout: fixed;
  border-collapse: collapse;
  line-height: 13px;
  color: #2b2b33;

  & + & {
    margin-top: -1px;
  }
  th,
  td {
    height: 14px;
    padding: 0 8px 0 0;
    border: 1px solid #d3d1d8;
    border-left-color: #9f9da6;
    border-right-color: #9f9da6;
    text-align: center;
  }
  & + & td {
    padding: 0;
  }
  & + & td:last-child {
    padding-left: 20px;
  }
  th {
    padding: 0 0 0 1px;
    font-weight: 400;
    text-align: left;
  }
  tr:first-child th {
    font-weight: 700;
    color: #08080c;
  }
  tr:first-child > * {
    border-top-color: #9f9da6;
  }
`;

const TableThumb = styled.div`
  width: 13px;
  height: 46px;
  background: #cbcacd;
`;

const Playback = styled.div`
  display: flex;
  align-items: center;
  height: 40px;
  padding-left: 4px;
`;

const GripDots = styled.span`
  width: 4px;
  height: 22px;
  margin-right: 8px;
  border-left: 2px dotted #c4c2c8;
`;

const PlayButtons = styled.div`
  display: flex;
  gap: 6px;
`;

const PlayButton = styled.button`
  display: grid;
  place-items: center;
  width: 23px;
  height: 22px;
  background: #cfced1;
  border: 1px solid #c2c1c5;
  color: #a3a2a7;
`;

const Rate = styled.span`
  font-weight: 700;
  font-size: 10px;
  color: #6f6e74;
`;

const Speed = styled.input.attrs({ type: "range" })`
  appearance: none;
  width: 78px;
  height: 22px;
  margin: 0 5px 0 6px;
  padding: 0 8px;
  background: #f4f3f5;

  &::-webkit-slider-runnable-track {
    height: 3px;
    border: 1px solid #d2d1d5;
  }
  &::-webkit-slider-thumb {
    appearance: none;
    width: 11px;
    height: 19px;
    margin-top: -9px;
    background: #c9c8cb;
    clip-path: polygon(0 0, 100% 0, 100% 75%, 50% 100%, 0 75%);
  }
`;

const Clock = styled.div`
  width: 118px;
  height: 22px;
  margin-left: 5px;
  background: #000;
`;

const Field = styled.label`
  display: flex;
  align-items: center;
  gap: 6px;
  padding-left: 14px;
  white-space: nowrap;

  & + & {
    padding-left: 6px;
  }
`;

const DialogFooter = styled.footer`
  display: flex;
  justify-content: flex-end;
  height: 23px;
  padding: 3px 18px 0 0;
  background: #fdfcfe;
`;

const DialogHelp = styled.button`
  display: flex;
  align-items: center;
  gap: 4px;
  height: 18px;
`;

const ChartText = styled.text`
  font: 11px ${ARIAL};
  fill: #35343c;
`;

const Chart = () => {
  const xs = [165, 290, 414, 539, 664, 789, 914];
  const ground = "M81 54.500 130 56 165 58 237 60 290 61 367 62.500 414 64 497 65.500 539 67 597 68 664 69.500 789 72.500 877 73.500 916 74.500";
  const tank = (x: number, y: number) => (
    <g>
      <rect x={x} y={y} width="16" height={271 - y} fill="url(#shaft)" />
      <path d={`M${x} 271V${y}h16V271`} fill="none" stroke="#55555a" />
    </g>
  );
  return (
    <svg width="927" height="329" viewBox="0 0 927 329" role="img" aria-label="Elevation against distance">
      <defs>
        <linearGradient id="shaft">
          <stop offset="0" stopColor="#8b8a8e" />
          <stop offset=".2" stopColor="#bdbbbf" />
          <stop offset=".5" stopColor="#ffffff" />
          <stop offset=".8" stopColor="#fbf6fb" />
          <stop offset="1" stopColor="#b5b3b8" />
        </linearGradient>
      </defs>
      <path d={`${ground}V271H81z`} fill="#92f096" />
      <path d="M81 40.500h835M81 130.500h835M81 223.500h835" stroke="#ccd2cc" />
      <path d="M81 85.500h835M81 176.500h835M81 267.500h835" stroke="#9fb5a1" />
      {xs.map((x) => (
        <path key={x} d={`M${x}.5 0V271`} stroke="#a9a8ad" />
      ))}
      <path d="M81.500 .500V271.500H916.500V.500z" fill="none" stroke="#b9b6bd" />
      <path d={ground} fill="none" stroke="#4fa056" />
      <path d="M81 66.500 165 70.500 233 72.500 290 72.500 414 75.500 497 77.500 571 79.500 627 79.500 664 81 757 83.500 847 84.500 916 85.500" fill="none" stroke="#74507c" />
      {tank(233, 60)}
      {tank(571, 67)}
      <path d="M328.500 81l13 26h-8.500v98a4.500 4.500 0 0 1-9 0v-98h-8.500z" fill="#d94e26" />
      <path d="M507 89v15l4-3 3 6 3-1-3-6h5z" fill="#fff" stroke="#55535a" strokeWidth="1.200" />
      {([["40.000", 89], ["30.000", 180], ["20.000", 271]] as [string, number][]).map(([t, y]) => (
        <ChartText key={t} x="77" y={y} textAnchor="end">{t}</ChartText>
      ))}
      {["60.000", "70.000", "80.000", "90.000", "100.000", "110.000", "120.000"].map((t, i) => (
        <ChartText key={t} x={xs[i]} y="285" textAnchor="middle">{t}</ChartText>
      ))}
      <ChartText x="498" y="302" textAnchor="middle">Distance (m)</ChartText>
      <ChartText textAnchor="middle" transform="translate(42 136) rotate(-90)">Elevation [m]</ChartText>
    </svg>
  );
};

const Minus = () => (
  <svg width="16" height="16" viewBox="0 0 16 16" aria-hidden="true"><path d="M0 8h16" stroke="currentColor" strokeWidth="4" /></svg>
);
const Plus = () => (
  <svg width="16" height="16" viewBox="0 0 16 16" aria-hidden="true"><path d="M0 8h16M8 0v16" stroke="currentColor" strokeWidth="4" /></svg>
);

const junctionRows = [
  ["Junction", "Manhole (2)", "Manhole (3)", ""],
  ["Type", "Manhole", "Manhole", ""],
  ["CE (m)", "42.699", "41.920", ""],
  ["IE (m)", "0.000", "0.000", ""],
];
const connectionRows = [
  ["Connection", "", "Pipe (2)", "Pipe (3)"],
  ["Type", "", "Pipe", "Pipe"],
  ["Curved", "", "No", "No"],
  ["Length (m)", "", "25.860", "27.369"],
  ["Diam (mm)", "", "0", "0"],
  ["U/S IE (m)", "", "0.000", "0.000"],
  ["D/S IE (m)", "", "0.000", "0.000"],
];

const Grid = ({ rows, cols }: { rows: string[][]; cols: number[] }) => (
  <DataTable>
    <colgroup>{cols.map((w, i) => <col key={i} width={w || undefined} />)}</colgroup>
    <tbody>
      {rows.map(([head, ...cells]) => (
        <tr key={head}>
          <th scope="row">{head}</th>
          {cells.map((c, i) => <td key={i}>{c}</td>)}
        </tr>
      ))}
    </tbody>
  </DataTable>
);

const ProfileWindow = () => (
  <Dialog role="dialog" aria-labelledby="profile-title">
    <DialogTitle>
      <Icon name="profile" size={16} />
      <h1 id="profile-title">Profile - Flow1</h1>
      <DialogButtons>
        <FlatButton aria-label="Minimize">
          <svg width="12" height="12" viewBox="0 0 12 12"><path d="M1 6.500h10" stroke="currentColor" /></svg>
        </FlatButton>
        <FlatButton aria-label="Maximize">
          <svg width="12" height="12" viewBox="0 0 12 12"><path d="M1.500 1.500h9v9h-9z" fill="none" stroke="currentColor" strokeWidth="1.200" /></svg>
        </FlatButton>
        <FlatButton aria-label="Close"><Cross size={13} /></FlatButton>
      </DialogButtons>
    </DialogTitle>
    <ToolBar role="toolbar">
      {toolbar.map((t, i) =>
        t === "|" ? <Divider key={i} /> : (
          <ToolIcon key={i} $on={pressed.includes(t)} aria-label={t}>
            <Icon name={t} size={18} />
          </ToolIcon>
        )
      )}
    </ToolBar>
    <ChartArea>
      <Chart />
      <SideKeys>
        <VBar $track="#d6d4d7" $edge="#f5f4f6">
          <button aria-label="Scroll up"><Chevron dir="up" width={2} /></button>
          <VBarTrack $height={249} $before={70}><Grip $vertical><i /><i /></Grip></VBarTrack>
          <button aria-label="Scroll down"><Chevron width={2} /></button>
        </VBar>
        <ZoomKey aria-label="Zoom out vertically"><Minus /></ZoomKey>
        <ZoomKey aria-label="Zoom in vertically"><Plus /></ZoomKey>
      </SideKeys>
    </ChartArea>
    <RangeRow>
      <RangeBar>
        <button aria-label="Scroll left"><Chevron dir="left" width={2} /></button>
        <RangeTrack><Grip><i /><i /></Grip></RangeTrack>
        <button aria-label="Scroll right"><Chevron dir="right" width={2} /></button>
      </RangeBar>
      <ZoomKey aria-label="Zoom out horizontally"><Minus /></ZoomKey>
      <ZoomKey aria-label="Zoom in horizontally"><Plus /></ZoomKey>
    </RangeRow>
    <DataPane>
      <Tables>
        <Grid rows={junctionRows} cols={[79, 331, 350, 0]} />
        <Grid rows={connectionRows} cols={[79, 161, 340, 0]} />
      </Tables>
      <VBar $track="#f3f2f4" $edge="#f8f7f9">
        <button aria-label="Scroll up"><Chevron dir="up" width={2} /></button>
        <VBarTrack $height={113} $before={0}>
          <TableThumb />
        </VBarTrack>
        <button aria-label="Scroll down"><Chevron width={2} /></button>
      </VBar>
    </DataPane>
    <Playback>
      <GripDots />
      <PlayButtons>
        <PlayButton aria-label="Play"><svg width="8" height="10" viewBox="0 0 8 10"><path d="M1 0l7 5-7 5z" fill="currentColor" /></svg></PlayButton>
        <PlayButton aria-label="Stop"><svg width="8" height="8" viewBox="0 0 8 8"><path d="M0 0h8v8H0z" fill="#efeef0" /></svg></PlayButton>
        <PlayButton><Rate>1x</Rate></PlayButton>
        <PlayButton aria-label="Record"><svg width="8" height="8" viewBox="0 0 8 8"><circle cx="4" cy="4" r="3" fill="#efeef0" stroke="currentColor" /></svg></PlayButton>
        <PlayButton aria-label="First"><svg width="10" height="10" viewBox="0 0 10 10"><path d="M1 0v10M4 0v10M9 1L5 5l4 4z" stroke="currentColor" fill="#efeef0" /></svg></PlayButton>
      </PlayButtons>
      <Speed aria-label="Playback speed" defaultValue={0} disabled />
      <PlayButton aria-label="Last"><svg width="10" height="10" viewBox="0 0 10 10"><path d="M9 0v10M1 1l5 4-5 4z" stroke="currentColor" fill="#efeef0" /></svg></PlayButton>
      <Clock />
      <Field>
        Select Rainfall:
        <SelectBox $width={172} $shade="#f3f2f4" $key="#fff"><select disabled /><Chevron size={10} /></SelectBox>
      </Field>
      <Field>
        Select Event:
        <SelectBox $width={172} $shade="#f3f2f4" $key="#fff"><select disabled /><Chevron size={10} /></SelectBox>
      </Field>
    </Playback>
    <DialogFooter>
      <DialogHelp><Icon name="help" size={15} />Help</DialogHelp>
    </DialogFooter>
  </Dialog>
);

/* ---------- page ---------- */

const menus = ["File", "Plan", "Import", "Rainfall/Pollutants", "Preliminary Sizing", "Build", "Analysis", "Results", "Export", "Views", "Help"];

export default function App() {
  return (
    <Page>
      <GlobalStyle />
      <TitleBar>
        <QuickAccess>
          <svg width="24" height="26" viewBox="0 0 24 26" role="img" aria-label="InfoDrainage">
            <path d="M2 0h22v26H0V3z" fill="#e01a4f" />
            <path d="M2 0L0 3v23l3-3V0z" fill="#f4557c" />
            <path d="M1 18h23v8H0z" fill="#8c1235" />
            <path d="M9 4h7M9 14h7M12.500 4v10" stroke="#fff" strokeWidth="2" />
            <path d="M6 20v4h2v-4zM10 24v-4h3l-2 2 2 2M15 24v-4l3 4v-4" stroke="#f3c6d2" strokeWidth=".9" fill="none" />
          </svg>
          <FlatButton aria-label="Save">
            <svg width="17" height="17" viewBox="0 0 17 17"><path d="M1 1h15v15H3l-2-2z" fill="#fff" /><path d="M4 2h9v7H4zM5 12h7v4H5z" fill="#2a579a" /><path d="M8 12h2v3H8z" fill="#fff" /></svg>
          </FlatButton>
          <FlatButton aria-label="Undo" $tone="#9db8e3">
            <svg width="15" height="15" viewBox="0 0 15 15"><path d="M2 1v6h6M2.500 6.500Q6 1 10 3t2 8l-3 3" fill="none" stroke="currentColor" strokeWidth="2" /></svg>
          </FlatButton>
          <FlatButton aria-label="Undo list" $tone="#b9cdec"><Caret size={6} /></FlatButton>
          <FlatButton aria-label="Redo" $tone="#7fa0d3">
            <svg width="15" height="15" viewBox="0 0 15 15"><path d="M13 1v6H7M12.500 6.500Q9 1 5 3t-2 8l3 3" fill="none" stroke="currentColor" strokeWidth="2" /></svg>
          </FlatButton>
          <FlatButton aria-label="Redo list" $tone="#b9cdec"><Caret size={6} /></FlatButton>
          <FlatButton aria-label="Customize toolbar">
            <svg width="18" height="9" viewBox="0 0 18 9"><path d="M7 1h6" stroke="#fff" /><path d="M7 4h6l-3 4z" fill="#fff" /></svg>
          </FlatButton>
        </QuickAccess>
        <ContextTitle>Flow Path</ContextTitle>
        <WindowTitle>InfoDrainage - [Sizing no surcharge.iddx]</WindowTitle>
        <Account aria-label="Account">
          <svg width="15" height="16" viewBox="0 0 15 16"><circle cx="7.500" cy="5" r="3" fill="none" stroke="currentColor" strokeWidth="1.500" /><path d="M1 16q0-7 6.500-7t6.500 7" fill="none" stroke="currentColor" strokeWidth="1.500" /></svg>
          <Caret />
        </Account>
        <WindowButtons>
          <FlatButton aria-label="Minimize"><svg width="11" height="11" viewBox="0 0 11 11"><path d="M0 5.500h11" stroke="currentColor" /></svg></FlatButton>
          <FlatButton aria-label="Restore"><svg width="11" height="11" viewBox="0 0 11 11"><path d="M.5 2.500h8v8h-8zM2.500 2V.5h8v8H9" fill="none" stroke="currentColor" /></svg></FlatButton>
          <FlatButton aria-label="Close"><Cross size={11} /></FlatButton>
        </WindowButtons>
      </TitleBar>
      <MenuBar>
        <MenuTabs>
          {menus.map((m) => (
            <MenuTab key={m} $wide={m.length > 10}>{m}</MenuTab>
          ))}
        </MenuTabs>
        <MenuTab $active>Edit</MenuTab>
        <HelpMenu><Icon name="help" size={15} />Help<Caret size={6} /></HelpMenu>
      </MenuBar>
      <Ribbon>
        <RibbonGroup>
          <RibbonItems>
            <RibbonButton><Icon name="editForm" size={31} />Edit</RibbonButton>
            <RibbonButton><Icon name="duplicate" size={31} />Duplicate</RibbonButton>
            <RibbonButton><Icon name="remove" size={31} />Delete</RibbonButton>
            <RibbonButton><Icon name="rename" size={31} />Rename</RibbonButton>
            <RibbonButton><Icon name="numbering" size={31} />Apply Numbering Scheme</RibbonButton>
          </RibbonItems>
          <div>Edit</div>
        </RibbonGroup>
        <RibbonGroup>
          <RibbonItems>
            <RibbonButton><Icon name="profile" size={31} />Show Profile</RibbonButton>
          </RibbonItems>
          <div>Profiles</div>
        </RibbonGroup>
        <Collapse aria-label="Collapse ribbon"><Chevron dir="up" size={14} /></Collapse>
      </Ribbon>
      <Workspace>
        <Side $width={274}>
          <PaneHeader $right={6}>
            <h2>Tree View</h2>
            <FlatButton aria-label="Pin tree view"><Pin /></FlatButton>
            <FlatButton aria-label="Close tree view"><Cross size={9} width={2} /></FlatButton>
          </PaneHeader>
          <TreeBody>
            <Tree />
            <HScroll>
              <button aria-label="Scroll left"><Chevron dir="left" width={2} /></button>
              <HTrack><HThumb /></HTrack>
              <button aria-label="Scroll right"><Chevron dir="right" width={2} /></button>
            </HScroll>
          </TreeBody>
        </Side>
        <Center>
          <PaneHeader $left={2}>
            <h2>Plan View</h2>
            <FlatButton aria-label="Close plan view"><Cross size={9} width={2} /></FlatButton>
          </PaneHeader>
          <Canvas>
            <SurfaceTip width="42" height="32" viewBox="0 0 42 32" aria-hidden="true">
              <path d="M2 2h38L27 28z" fill="#17331f" stroke="#1c6b24" />
              <circle cx="27" cy="28" r="3" fill="none" stroke="#1c8a24" />
            </SurfaceTip>
            <ProfileWindow />
            <StatusBar>
              <StatusCell $width={728}>534435.297, 201421.168, 43.599</StatusCell>
              <StatusCell>&lt;Del&gt; Delete path, &lt;F4&gt; Show Profile</StatusCell>
            </StatusBar>
          </Canvas>
          <BottomTabs>
            <BottomTab $active>Plan View</BottomTab>
            <BottomTab>3D View</BottomTab>
          </BottomTabs>
        </Center>
        <Side $width={257}>
          <PaneHeader $left={5}>
            <h2>Toolbox</h2>
            <FlatButton aria-label="Pin toolbox"><Pin /></FlatButton>
            <FlatButton aria-label="Close toolbox"><Cross size={9} width={2} /></FlatButton>
          </PaneHeader>
          <ToolboxBody>
            <Category name="Tools" sign="-" />
            <ul>
              {tools.map(([label, icon]) => (
                <ToolRow key={label} $active={label === "Select"}>
                  <ToolButton><Icon name={icon} size={25} />{label}</ToolButton>
                </ToolRow>
              ))}
            </ul>
            <Category name="Inflows" sign="+" />
            <Category name="Junctions" sign="+" />
            <Category name="Stormwater Controls" sign="+" />
            <Category name="Connections" sign="+" />
          </ToolboxBody>
          <BottomTabs $start={6}>
            <BottomTab $active>Toolbox</BottomTab>
            <BottomTab>Properties</BottomTab>
          </BottomTabs>
        </Side>
      </Workspace>
    </Page>
  );
}
